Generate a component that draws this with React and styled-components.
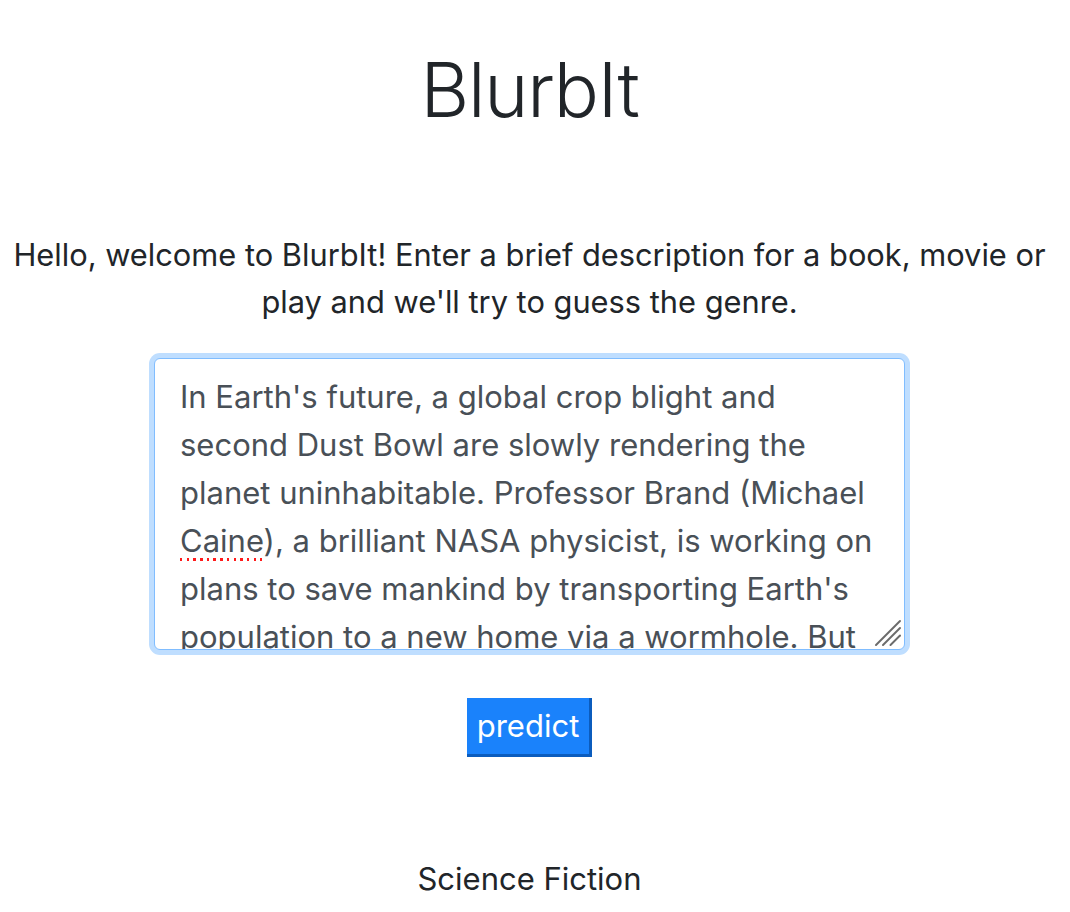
import React from "react";
import styled, { createGlobalStyle } from "styled-components";

const Global = createGlobalStyle`
  html, body { margin: 0; padding: 0; background: #fff; }
  body { font-family: Inter, "Noto Sans", "Liberation Sans", sans-serif; color: #212529; }
`;

const Page = styled.main`
  display: flex;
  flex-direction: column;
  align-items: center;
  padding: 43px 11px 0 0;
  text-align: center;
`;

const Title = styled.h1`
  margin: 0;
  font-size: 75px;
  font-weight: 300;
  line-height: 94px;
  color: #212529;
  letter-spacing: -1.2px;
`;

const Intro = styled.p`
  margin: 94px 0 0;
  font-size: 30.8px;
  line-height: 47px;
  color: #212529;
`;

const Field = styled.div`
  position: relative;
  margin-top: 33px;
  width: 751px;
  height: 292px;
`;

const Blurb = styled.textarea`
  display: block;
  box-sizing: border-box;
  width: 100%;
  height: 100%;
  margin: 0;
  padding: 14px 25px;
  font-family: inherit;
  font-size: 31px;
  line-height: 48px;
  color: #495057;
  background: #fff;
  border: 1px solid #80bdff;
  border-radius: 6px;
  box-shadow: 0 0 0 5px #bfdeff;
  outline: none;
  resize: none;
  overflow: hidden;
  text-align: left;
`;

const Grip = styled.svg`
  position: absolute;
  right: 3px;
  bottom: 3px;
  width: 28px;
  height: 28px;
  pointer-events: none;
`;

const Misspelled = styled.span`
  position: absolute;
  left: 26px;
  top: 200px;
  width: 82px;
  height: 3px;
  background: repeating-linear-gradient(90deg, #ff1a1a 0 2.5px, transparent 2.5px 6.7px);
  pointer-events: none;
`;

const PredictButton = styled.button`
  margin-top: 48px;
  height: 59px;
  padding: 0 10px 2px;
  font-family: inherit;
  font-size: 31px;
  color: #fff;
  background: #1a82fb;
  border: none;
  border-right: 3px solid #0b5cbd;
  border-bottom: 3px solid #0b5cbd;
  cursor: pointer;
`;

const Result = styled.p`
  margin: 98px 0 0;
  font-size: 31px;
  line-height: 47px;
  color: #212529;
`;

const blurb =
  "In Earth's future, a global crop blight and second Dust Bowl are slowly rendering the planet uninhabitable. Professor Brand (Michael Caine), a brilliant NASA physicist, is working on plans to save mankind by transporting Earth's population to a new home via a wormhole. But first, Brand must send former NASA pilot Cooper (Matthew McConaughey) and a team of researchers through the wormhole and across the galaxy to find out which of three planets could be mankind's new home.";

export default function App() {
  return (
    <>
      <Global />
      <Page>
        <Title>BlurbIt</Title>
        <Intro>
          Hello, welcome to BlurbIt! Enter a brief description for a book, movie or
          <br />
          play and we'll try to guess the genre.
        </Intro>
        <Field>
          <Blurb defaultValue={blurb} spellCheck={false} />
          <Misspelled />
          <Grip viewBox="0 0 28 28">
            <g stroke="#6b6b6b" strokeWidth="2" strokeLinecap="round">
              <line x1="2" y1="26" x2="26" y2="2" />
              <line x1="9" y1="26" x2="26" y2="9" />
              <line x1="16.5" y1="26" x2="26" y2="16.5" />
            </g>
          </Grip>
        </Field>
        <PredictButton>predict</PredictButton>
        <Result>Science Fiction</Result>
      </Page>
    </>
  );
}
